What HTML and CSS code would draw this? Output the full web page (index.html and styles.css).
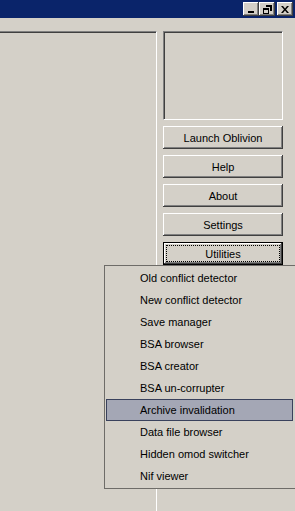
FILE: index.html
```html
<!DOCTYPE html>
<html lang="en">
<head>
    <meta charset="UTF-8">
    <meta name="viewport" content="width=device-width, initial-scale=1.0">
    <title>Oblivion Mod Manager</title>
    <link rel="stylesheet" href="styles.css">
</head>
<body>
    <div class="window">
        <!-- Title bar -->
        <div class="titlebar">
            <div class="caption-btns">
                <button class="cap-btn" aria-label="Minimize">
                    <svg width="8" height="8" viewBox="0 0 8 8"><rect x="1" y="6" width="6" height="2" fill="#000"/></svg>
                </button>
                <button class="cap-btn" aria-label="Restore">
                    <svg width="9" height="9" viewBox="0 0 9 9">
                        <path d="M3 0h6v6H7V2H3z" fill="#000"/>
                        <path d="M3 0h6v1H3z" fill="#000"/>
                        <path d="M0 3h6v6H0zM1 5v3h4V5z" fill="#000" fill-rule="evenodd"/>
                    </svg>
                </button>
                <button class="cap-btn close" aria-label="Close">
                    <svg width="8" height="7" viewBox="0 0 8 7">
                        <path d="M0 0h2l2 2.5L6 0h2L5 3.5 8 7H6L4 4.5 2 7H0l3-3.5z" fill="#000"/>
                    </svg>
                </button>
            </div>
        </div>

        <!-- Main area -->
        <div class="content">
            <div class="mod-list"></div>
            <div class="side">
                <div class="preview"></div>
                <button class="btn">Launch Oblivion</button>
                <button class="btn">Help</button>
                <button class="btn">About</button>
                <button class="btn">Settings</button>
                <button class="btn default"><span class="focus">Utilities</span></button>
            </div>
        </div>

        <!-- Utilities popup menu -->
        <ul class="menu">
            <li>Old conflict detector</li>
            <li>New conflict detector</li>
            <li>Save manager</li>
            <li>BSA browser</li>
            <li>BSA creator</li>
            <li>BSA un-corrupter</li>
            <li class="active">Archive invalidation</li>
            <li>Data file browser</li>
            <li>Hidden omod switcher</li>
            <li>Nif viewer</li>
        </ul>
    </div>
</body>
</html>
```

FILE: styles.css
```css
* {
    margin: 0;
    padding: 0;
    box-sizing: border-box;
}
:root {
    --face: #D4D0C8;
    --shadow: #808080;
    --dark: #404040;
    --light: #FFFFFF;
    --title: #0A246A;
}
body {
    font-family: 'Liberation Sans', Arial, sans-serif;
    font-size: 11px;
    color: #000;
    background: var(--face);
    width: 295px;
    height: 511px;
    overflow: hidden;
}
.window {
    position: relative;
    height: 511px;
}
/* Title bar */
.titlebar {
    height: 18px;
    background: var(--title);
    display: flex;
    justify-content: flex-end;
    align-items: flex-start;
    padding: 2px 2px 0 0;
}
.caption-btns {
    display: flex;
    gap: 2px;
}
.cap-btn {
    width: 16px;
    height: 14px;
    background: var(--face);
    border: none;
    box-shadow: inset -1px -1px 0 var(--dark), inset 1px 1px 0 var(--light), inset -2px -2px 0 var(--shadow);
    display: flex;
    align-items: center;
    justify-content: center;
}
.cap-btn:first-child {
    margin-right: -2px;
}
/* Content */
.content {
    display: flex;
    padding-top: 13px;
}
.mod-list {
    width: 159px;
    height: 480px;
    margin-left: -2px;
    border-top: 1px solid var(--shadow);
    border-right: 1px solid var(--light);
    box-shadow: inset 0 1px 0 var(--dark);
}
.side {
    width: 120px;
    margin-left: 6px;
    display: flex;
    flex-direction: column;
    gap: 6px;
}
.preview {
    height: 89px;
    border-top: 1px solid var(--shadow);
    border-left: 1px solid var(--shadow);
    border-right: 1px solid var(--light);
    border-bottom: 1px solid var(--light);
    box-shadow: inset 1px 1px 0 var(--dark);
}
.btn {
    height: 23px;
    font-family: inherit;
    font-size: 11px;
    color: #000;
    background: var(--face);
    border: none;
    box-shadow: inset -1px -1px 0 var(--dark), inset 1px 1px 0 var(--light), inset -2px -2px 0 var(--shadow);
}
.btn.default {
    border: 1px solid #000;
    padding: 2px;
    display: flex;
}
.btn.default .focus {
    flex: 1;
    border: 1px dotted #000;
    display: flex;
    align-items: center;
    justify-content: center;
}
/* Popup menu */
.menu {
    position: absolute;
    left: 104px;
    top: 265px;
    width: 192px;
    list-style: none;
    background: var(--face);
    border: 1px solid #6E6C68;
    padding: 1px 2px 1px 1px;
}
.menu li {
    height: 22px;
    line-height: 20px;
    padding-left: 33px;
    border: 1px solid transparent;
}
.menu li.active {
    background: #A4A7B5;
    border-color: #39415C;
}
```
